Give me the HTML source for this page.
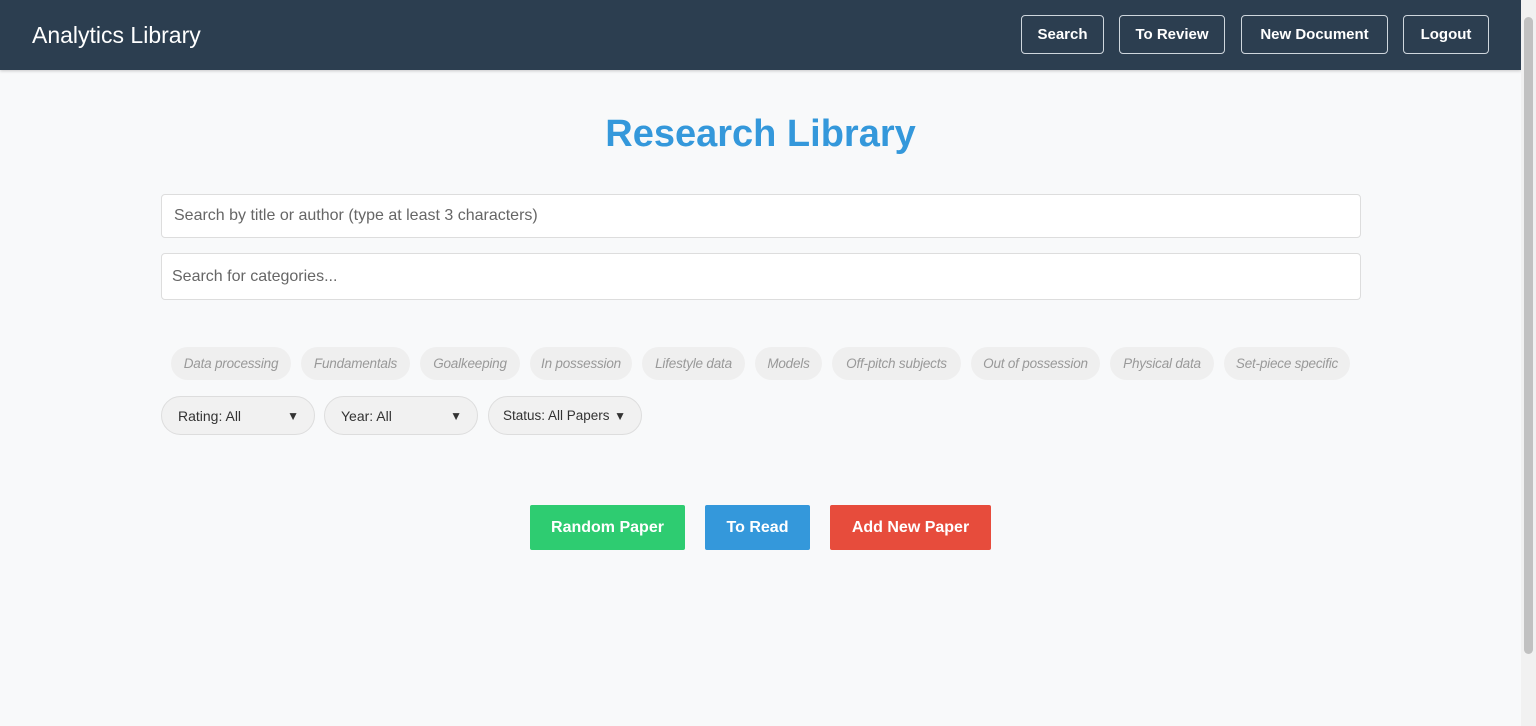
<!DOCTYPE html><html><head><meta charset="utf-8"><style>
*{box-sizing:border-box;margin:0;padding:0}
body{width:1536px;height:726px;overflow:hidden;background:#f8f9fa;font-family:"Liberation Sans",sans-serif;position:relative}
.hdr{position:absolute;left:0;top:0;width:1521px;height:70px;background:#2c3e50;box-shadow:0 1px 3px rgba(0,0,0,.2)}
.logo{position:absolute;left:32px;top:22px;color:#fff;font-size:23px}
.nb{position:absolute;top:15px;height:39px;border:1px solid #cfd6dd;border-radius:4px;color:#fff;font-weight:bold;font-size:15px;display:flex;align-items:center;justify-content:center}
h1{position:absolute;left:0;width:1521px;top:113px;text-align:center;color:#3498db;font-size:38px;font-weight:bold}
.inp{position:absolute;left:161px;width:1200px;background:#fff;border:1px solid #ddd;border-radius:4px;color:#666;font-size:16px;display:flex;align-items:center}
.chip{position:absolute;top:347px;height:33px;background:#efefef;border-radius:17px;color:#999;font-style:italic;font-size:13.5px;display:flex;align-items:center;justify-content:center;white-space:nowrap;letter-spacing:-0.2px}
.sel{position:absolute;top:396px;height:39px;background:#f1f1f1;border:1px solid #ddd;border-radius:20px;font-size:14px;color:#333;display:flex;align-items:center;padding-left:16px;white-space:nowrap}
.sel span{position:absolute;right:15px;font-size:12px}
.btn{position:absolute;top:505px;height:45px;color:#fff;font-weight:bold;font-size:16px;display:flex;align-items:center;justify-content:center;border-radius:2px}
.sb{position:absolute;right:0;top:0;width:15px;height:726px;background:#f1f1f1}
.th{position:absolute;right:3px;top:17px;width:9px;height:637px;background:#c1c1c1;border-radius:5px}
</style></head><body>
<div class="hdr"><div class="logo">Analytics Library</div>
<div class="nb" style="left:1021px;width:83px">Search</div>
<div class="nb" style="left:1119px;width:106px">To Review</div>
<div class="nb" style="left:1241px;width:147px">New Document</div>
<div class="nb" style="left:1403px;width:86px">Logout</div></div>
<h1>Research Library</h1>
<div class="inp" style="top:194px;height:44px;padding-left:12px">Search by title or author (type at least 3 characters)</div>
<div class="inp" style="top:253px;height:47px;padding-left:10px">Search for categories...</div>
<div class="chip" style="left:171px;width:120px">Data processing</div>
<div class="chip" style="left:301px;width:109px">Fundamentals</div>
<div class="chip" style="left:420px;width:100px">Goalkeeping</div>
<div class="chip" style="left:530px;width:102px">In possession</div>
<div class="chip" style="left:642px;width:103px">Lifestyle data</div>
<div class="chip" style="left:755px;width:67px">Models</div>
<div class="chip" style="left:832px;width:129px">Off-pitch subjects</div>
<div class="chip" style="left:971px;width:129px">Out of possession</div>
<div class="chip" style="left:1110px;width:104px">Physical data</div>
<div class="chip" style="left:1224px;width:126px">Set-piece specific</div>
<div class="sel" style="left:161px;width:154px">Rating: All<span>▼</span></div>
<div class="sel" style="left:324px;width:154px">Year: All<span>▼</span></div>
<div class="sel" style="left:488px;width:154px;padding-left:14px;font-size:13.5px">Status: All Papers<span>▼</span></div>
<div class="btn" style="left:530px;width:155px;background:#2ecc71">Random Paper</div>
<div class="btn" style="left:705px;width:105px;background:#3498db">To Read</div>
<div class="btn" style="left:830px;width:161px;background:#e74c3c">Add New Paper</div>
<div class="sb"><div class="th"></div></div>
</body></html>
